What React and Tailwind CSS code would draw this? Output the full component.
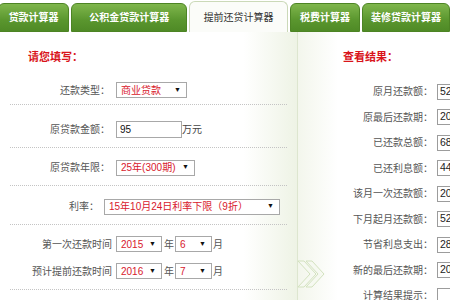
import React from "react";

const TABS = [
  { label: "贷款计算器", w: "w-[73px] -ml-[2px]" },
  { label: "公积金贷款计算器", w: "w-[119px]" },
  { label: "提前还贷计算器", w: "w-[101px]", active: true },
  { label: "税费计算器", w: "w-[72px]" },
  { label: "装修贷款计算器", w: "w-[90px]" },
];

const RESULTS = [
  ["原月还款额：", "52"],
  ["原最后还款期：", "20"],
  ["已还款总额：", "68"],
  ["已还利息额：", "44"],
  ["该月一次还款额：", "20"],
  ["下月起月还款额：", "52"],
  ["节省利息支出：", "28"],
  ["新的最后还款期：", "20"],
  ["计算结果提示：", ""],
];

function Select({ value, w }) {
  return (
    <div className={`flex h-[16px] shrink-0 items-center justify-between border border-[#a8a8a8] bg-white pl-[4px] pr-[5px] text-[10px] text-[#d8182c] ${w}`}>
      <span className="whitespace-nowrap">{value}</span>
      <span className="text-[7px] text-[#111]">▼</span>
    </div>
  );
}

function Tab({ label, w, active }) {
  if (active) {
    return (
      <div className={`relative z-10 flex h-[31px] items-center justify-center rounded-t-[6px] border border-b-0 border-[#cbd9b8] bg-[#fbfcf9] text-[10px] text-[#333] ${w}`}>
        {label}
      </div>
    );
  }
  return (
    <div className={`flex h-[29px] items-center justify-center rounded-t-[6px] border border-[#4d8424] bg-[linear-gradient(to_bottom,#7fb64c,#5a962e_60%,#4f8a26)] text-[10px] font-semibold text-white ${w}`}>
      {label}
    </div>
  );
}

export default function App() {
  return (
    <div className="relative h-[300px] w-[450px] overflow-hidden bg-white font-['Liberation_Sans','Noto_Sans_CJK_SC',sans-serif]">
      <div className="flex h-[32px] items-end gap-[2px] overflow-hidden">
        {TABS.map((t) => (
          <Tab key={t.label} {...t} />
        ))}
      </div>

      <div className="flex h-[268px]">
        {/* left: form */}
        <div className="w-[298px] shrink-0 border-r border-[#dde6cf] bg-[linear-gradient(to_right,#ffffff_82%,#eef3e5)]">
          <div className="h-[40px] pl-[28px] pt-[18px] text-[11px] font-bold leading-[14px] text-[#d9141b]">
            请您填写：
          </div>

          <div className="mx-[10px] flex h-[33px] items-center border-b border-dotted border-[#c4c4c4] pt-[4px]">
            <span className="w-[100px] text-right text-[10px] text-[#555]">还款类型：</span>
            <div className="ml-[6px]">
              <Select value="商业贷款" w="w-[71px]" />
            </div>
          </div>

          <div className="mx-[10px] flex h-[43px] items-center border-b border-dotted border-[#c4c4c4] pt-[6px]">
            <span className="w-[100px] text-right text-[10px] text-[#555]">原贷款金额：</span>
            <div className="ml-[6px] flex h-[17px] w-[66px] items-center border border-[#a8a8a8] bg-white pl-[3px] text-[10px] text-[#111]">
              95
            </div>
            <span className="text-[10px] text-[#444]">万元</span>
          </div>

          <div className="mx-[10px] flex h-[38px] items-center border-b border-dotted border-[#c4c4c4] pt-[2px]">
            <span className="w-[100px] text-right text-[10px] text-[#555]">原贷款年限：</span>
            <div className="ml-[6px]">
              <Select value="25年(300期)" w="w-[79px]" />
            </div>
          </div>

          <div className="mx-[10px] flex h-[39px] items-center border-b border-dotted border-[#c4c4c4] pt-[3px]">
            <span className="w-[89px] text-right text-[10px] text-[#555]">利率：</span>
            <div className="ml-[5px]">
              <Select value="15年10月24日利率下限（9折）" w="w-[176px]" />
            </div>
          </div>

          <div className="mx-[10px] flex h-[65px] flex-col gap-[11px] border-b border-dotted border-[#c4c4c4] pt-[11px]">
            {[
              ["第一次还款时间", "2015", "6"],
              ["预计提前还款时间", "2016", "7"],
            ].map(([label, y, m]) => (
              <div key={label} className="flex h-[16px] items-center text-[10px] text-[#555]">
                <span className="w-[102px] whitespace-nowrap text-right">{label}</span>
                <div className="ml-[4px]">
                  <Select value={y} w="w-[46px]" />
                </div>
                <span className="ml-[2px] w-[11px]">年</span>
                <Select value={m} w="w-[37px]" />
                <span className="ml-[1px]">月</span>
              </div>
            ))}
          </div>
        </div>

        {/* right: results */}
        <div className="flex-1 bg-[linear-gradient(to_right,#f3f6ec,#ffffff_40px)]">
          <div className="h-[40px] pl-[45px] pt-[18px] text-[11px] font-bold leading-[14px] text-[#d9141b]">
            查看结果：
          </div>
          <div className="mt-[7px] flex flex-col">
            {RESULTS.map(([label, v]) => (
              <div key={label} className="flex h-[25.5px] items-center">
                <span className="w-[135px] whitespace-nowrap text-right text-[10px] text-[#555]">{label}</span>
                <div className="ml-[4px] flex h-[16px] w-[40px] shrink-0 items-center border border-[#9c9c9c] bg-white pl-[2px] text-[10.5px] text-[#222]">
                  {v}
                </div>
              </div>
            ))}
          </div>
        </div>
      </div>

      {/* chevron between panels */}
      <svg className="absolute left-[296px] top-[260px]" width="30" height="30" viewBox="0 0 30 30">
        <polygon points="10,1 16,1 28,14 16,27 10,27 22,14" fill="#f6f9f1" stroke="#d3e2bf" strokeWidth="1" />
        <polygon points="2,1 8,1 20,14 8,27 2,27 14,14" fill="#f6f9f1" stroke="#d3e2bf" strokeWidth="1" />
      </svg>
    </div>
  );
}
